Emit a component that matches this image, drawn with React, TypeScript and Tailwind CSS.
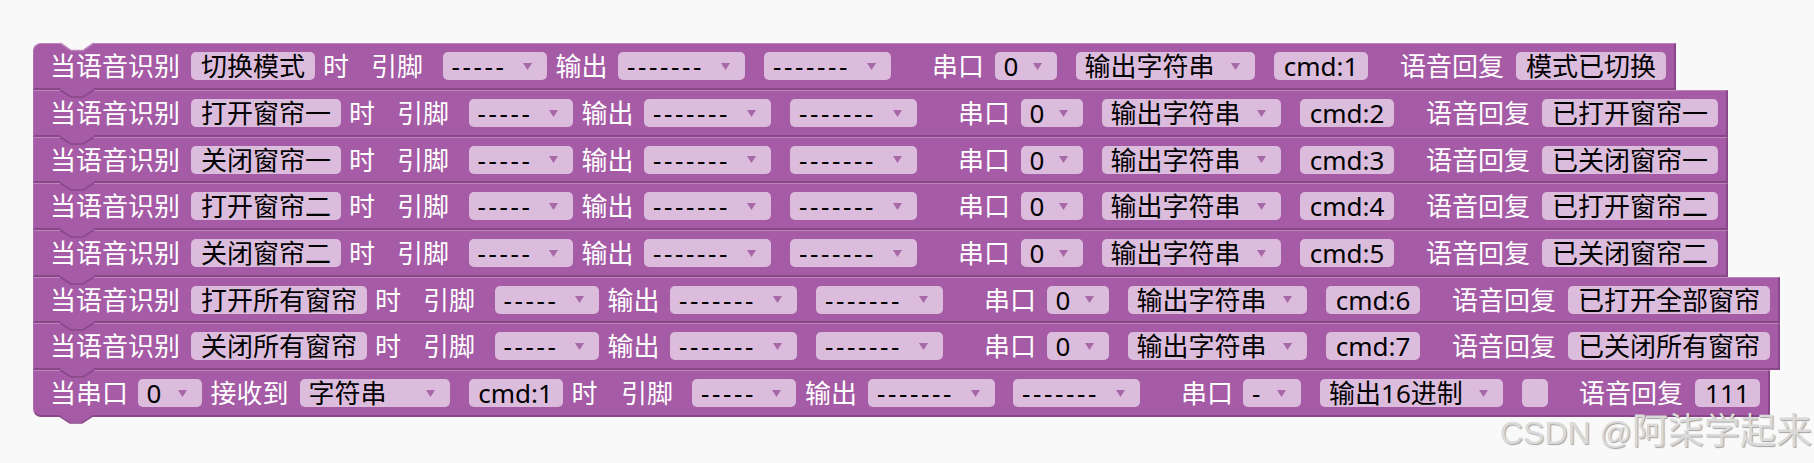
import React from 'react';

type Item = {
  k: 'l' | 'f' | 'd';
  t: string;
  c?: string;
};

const ROWS = [
  ['切换模式', 'cmd:1', '模式已切换'],
  ['打开窗帘一', 'cmd:2', '已打开窗帘一'],
  ['关闭窗帘一', 'cmd:3', '已关闭窗帘一'],
  ['打开窗帘二', 'cmd:4', '已打开窗帘二'],
  ['关闭窗帘二', 'cmd:5', '已关闭窗帘二'],
  ['打开所有窗帘', 'cmd:6', '已打开全部窗帘'],
  ['关闭所有窗帘', 'cmd:7', '已关闭所有窗帘'],
];

const HEIGHTS = ['h-[47px]', 'h-[47px]', 'h-[46px]', 'h-[47px]', 'h-[47px]', 'h-[46px]', 'h-[47px]', 'h-[47px]'];

function voiceRow(trigger: string, cmd: string, reply: string): Item[] {
  return [
    { k: 'l', t: '当语音识别' },
    { k: 'f', t: trigger, c: 'ml-[11px]' },
    { k: 'l', t: '时', c: 'ml-[8px]' },
    { k: 'l', t: '引脚', c: 'ml-[22px]' },
    { k: 'd', t: '-----', c: 'ml-[19.5px] w-[104px]' },
    { k: 'l', t: '输出', c: 'ml-[9px]' },
    { k: 'd', t: '-------', c: 'ml-[10.5px] w-[127px]' },
    { k: 'd', t: '-------', c: 'ml-[19px] w-[127px]' },
    { k: 'l', t: '串口', c: 'ml-[41px]' },
    { k: 'd', t: '0', c: 'ml-[10.5px] w-[62px]' },
    { k: 'd', t: '输出字符串', c: 'ml-[19px] w-[179px]' },
    { k: 'f', t: cmd, c: 'ml-[19.5px] w-[94px]' },
    { k: 'l', t: '语音回复', c: 'ml-[32px]' },
    { k: 'f', t: reply, c: 'ml-[12px]' },
  ];
}

const SERIAL_ROW: Item[] = [
  { k: 'l', t: '当串口' },
  { k: 'd', t: '0', c: 'ml-[9.5px] w-[64px]' },
  { k: 'l', t: '接收到', c: 'ml-[9px]' },
  { k: 'd', t: '字符串', c: 'ml-[11px] w-[150px]' },
  { k: 'f', t: 'cmd:1', c: 'ml-[19px] w-[94px]' },
  { k: 'l', t: '时', c: 'ml-[9px]' },
  { k: 'l', t: '引脚', c: 'ml-[23.5px]' },
  { k: 'd', t: '-----', c: 'ml-[19px] w-[104px]' },
  { k: 'l', t: '输出', c: 'ml-[9px]' },
  { k: 'd', t: '-------', c: 'ml-[11px] w-[127px]' },
  { k: 'd', t: '-------', c: 'ml-[18px] w-[127px]' },
  { k: 'l', t: '串口', c: 'ml-[41px]' },
  { k: 'd', t: '-', c: 'ml-[10px] w-[58px]' },
  { k: 'd', t: '输出16进制', c: 'ml-[19px] w-[183px]' },
  { k: 'f', t: '', c: 'ml-[19px] w-[26px]' },
  { k: 'l', t: '语音回复', c: 'ml-[31px]' },
  { k: 'f', t: '111', c: 'ml-[12px]' },
];

function Arrow() {
  return (
    <svg width="9" height="7" viewBox="0 0 9 7">
      <path d="M0 0 H9 L4.5 7 Z" fill="#a768a7" />
    </svg>
  );
}

function Part({ item }: { item: Item }) {
  if (item.k === 'l') {
    return <span className={`whitespace-nowrap leading-none text-white ${item.c ?? ''}`}>{item.t}</span>;
  }
  if (item.k === 'f') {
    return (
      <div className={`flex h-[28px] items-center justify-center rounded-[5px] bg-[#dcbcdc] px-[10px] text-black ${item.c ?? ''}`}>
        <span className="whitespace-nowrap leading-none">{item.t}</span>
      </div>
    );
  }
  const dashes = item.t.length > 1 && item.t.startsWith('-');
  return (
    <div className={`flex h-[28px] items-center justify-between rounded-[5px] bg-[#dcbcdc] pl-[9px] pr-[15px] text-black ${item.c ?? ''}`}>
      <span className={`whitespace-nowrap leading-none ${dashes ? 'tracking-[2.6px]' : ''}`}>{item.t}</span>
      <Arrow />
    </div>
  );
}

function Block({ items, index, last }: { items: Item[]; index: number; last: boolean }) {
  const corner = index === 0 ? 'rounded-tl-[8px]' : last ? 'rounded-bl-[8px]' : '';
  return (
    <div
      className={`relative flex w-fit items-center border-t border-b-2 border-r-2 border-l border-t-[#bd84bd] border-b-[#884888] border-r-[#884888] border-l-[#b06cb0] bg-[#a55ba5] pl-[16px] pr-[8px] ${HEIGHTS[index]} ${corner}`}
    >
      {index === 0 ? (
        <svg className="absolute left-[26px] top-[-2px]" width="34" height="10" viewBox="0 0 34 10">
          <polygon points="0,0 34,0 23,8 11,8" fill="#f9f9f9" />
          <polyline points="0,1 11,8.5 23,8.5 34,1" fill="none" stroke="#bd84bd" strokeWidth="1.5" />
        </svg>
      ) : (
        <svg className="absolute left-[26px] top-[-3px] z-10" width="34" height="12" viewBox="0 0 34 12">
          <polygon points="0,0 34,0 34,2 23,9 11,9 0,2" fill="#a55ba5" />
          <polyline points="0,2 11,9 23,9 34,2" fill="none" stroke="#884888" strokeWidth="1.6" />
        </svg>
      )}
      {last && (
        <svg className="absolute left-[25px] top-full z-10" width="34" height="10" viewBox="0 0 34 10">
          <polygon points="0,0 34,0 23,7.5 11,7.5" fill="#a55ba5" />
          <polyline points="0,0.8 11,8 23,8 34,0.8" fill="none" stroke="#884888" strokeWidth="1.6" />
        </svg>
      )}
      {items.map((it, i) => (
        <Part key={i} item={it} />
      ))}
    </div>
  );
}

export default function App() {
  const blocks = [...ROWS.map(([a, b, c]) => voiceRow(a, b, c)), SERIAL_ROW];
  return (
    <div className="relative h-[463px] w-[1814px] overflow-hidden bg-[#f9f9f9] font-['Noto_Sans','Noto_Sans_CJK_SC',sans-serif] text-[26px]">
      <div className="flex flex-col items-start pl-[33px] pt-[43px]">
        {blocks.map((items, i) => (
          <Block key={i} items={items} index={i} last={i === blocks.length - 1} />
        ))}
      </div>
      <div className="absolute left-[1500px] top-[410px] z-20 flex items-baseline whitespace-nowrap leading-none text-[#dadada] [text-shadow:1px_1px_1px_rgba(0,0,0,0.35)]">
        <span className="font-['Liberation_Sans',sans-serif] text-[32px]">CSDN @</span>
        <span className="font-['Noto_Sans_CJK_SC',sans-serif] text-[36px]">阿柒学起来</span>
      </div>
    </div>
  );
}
